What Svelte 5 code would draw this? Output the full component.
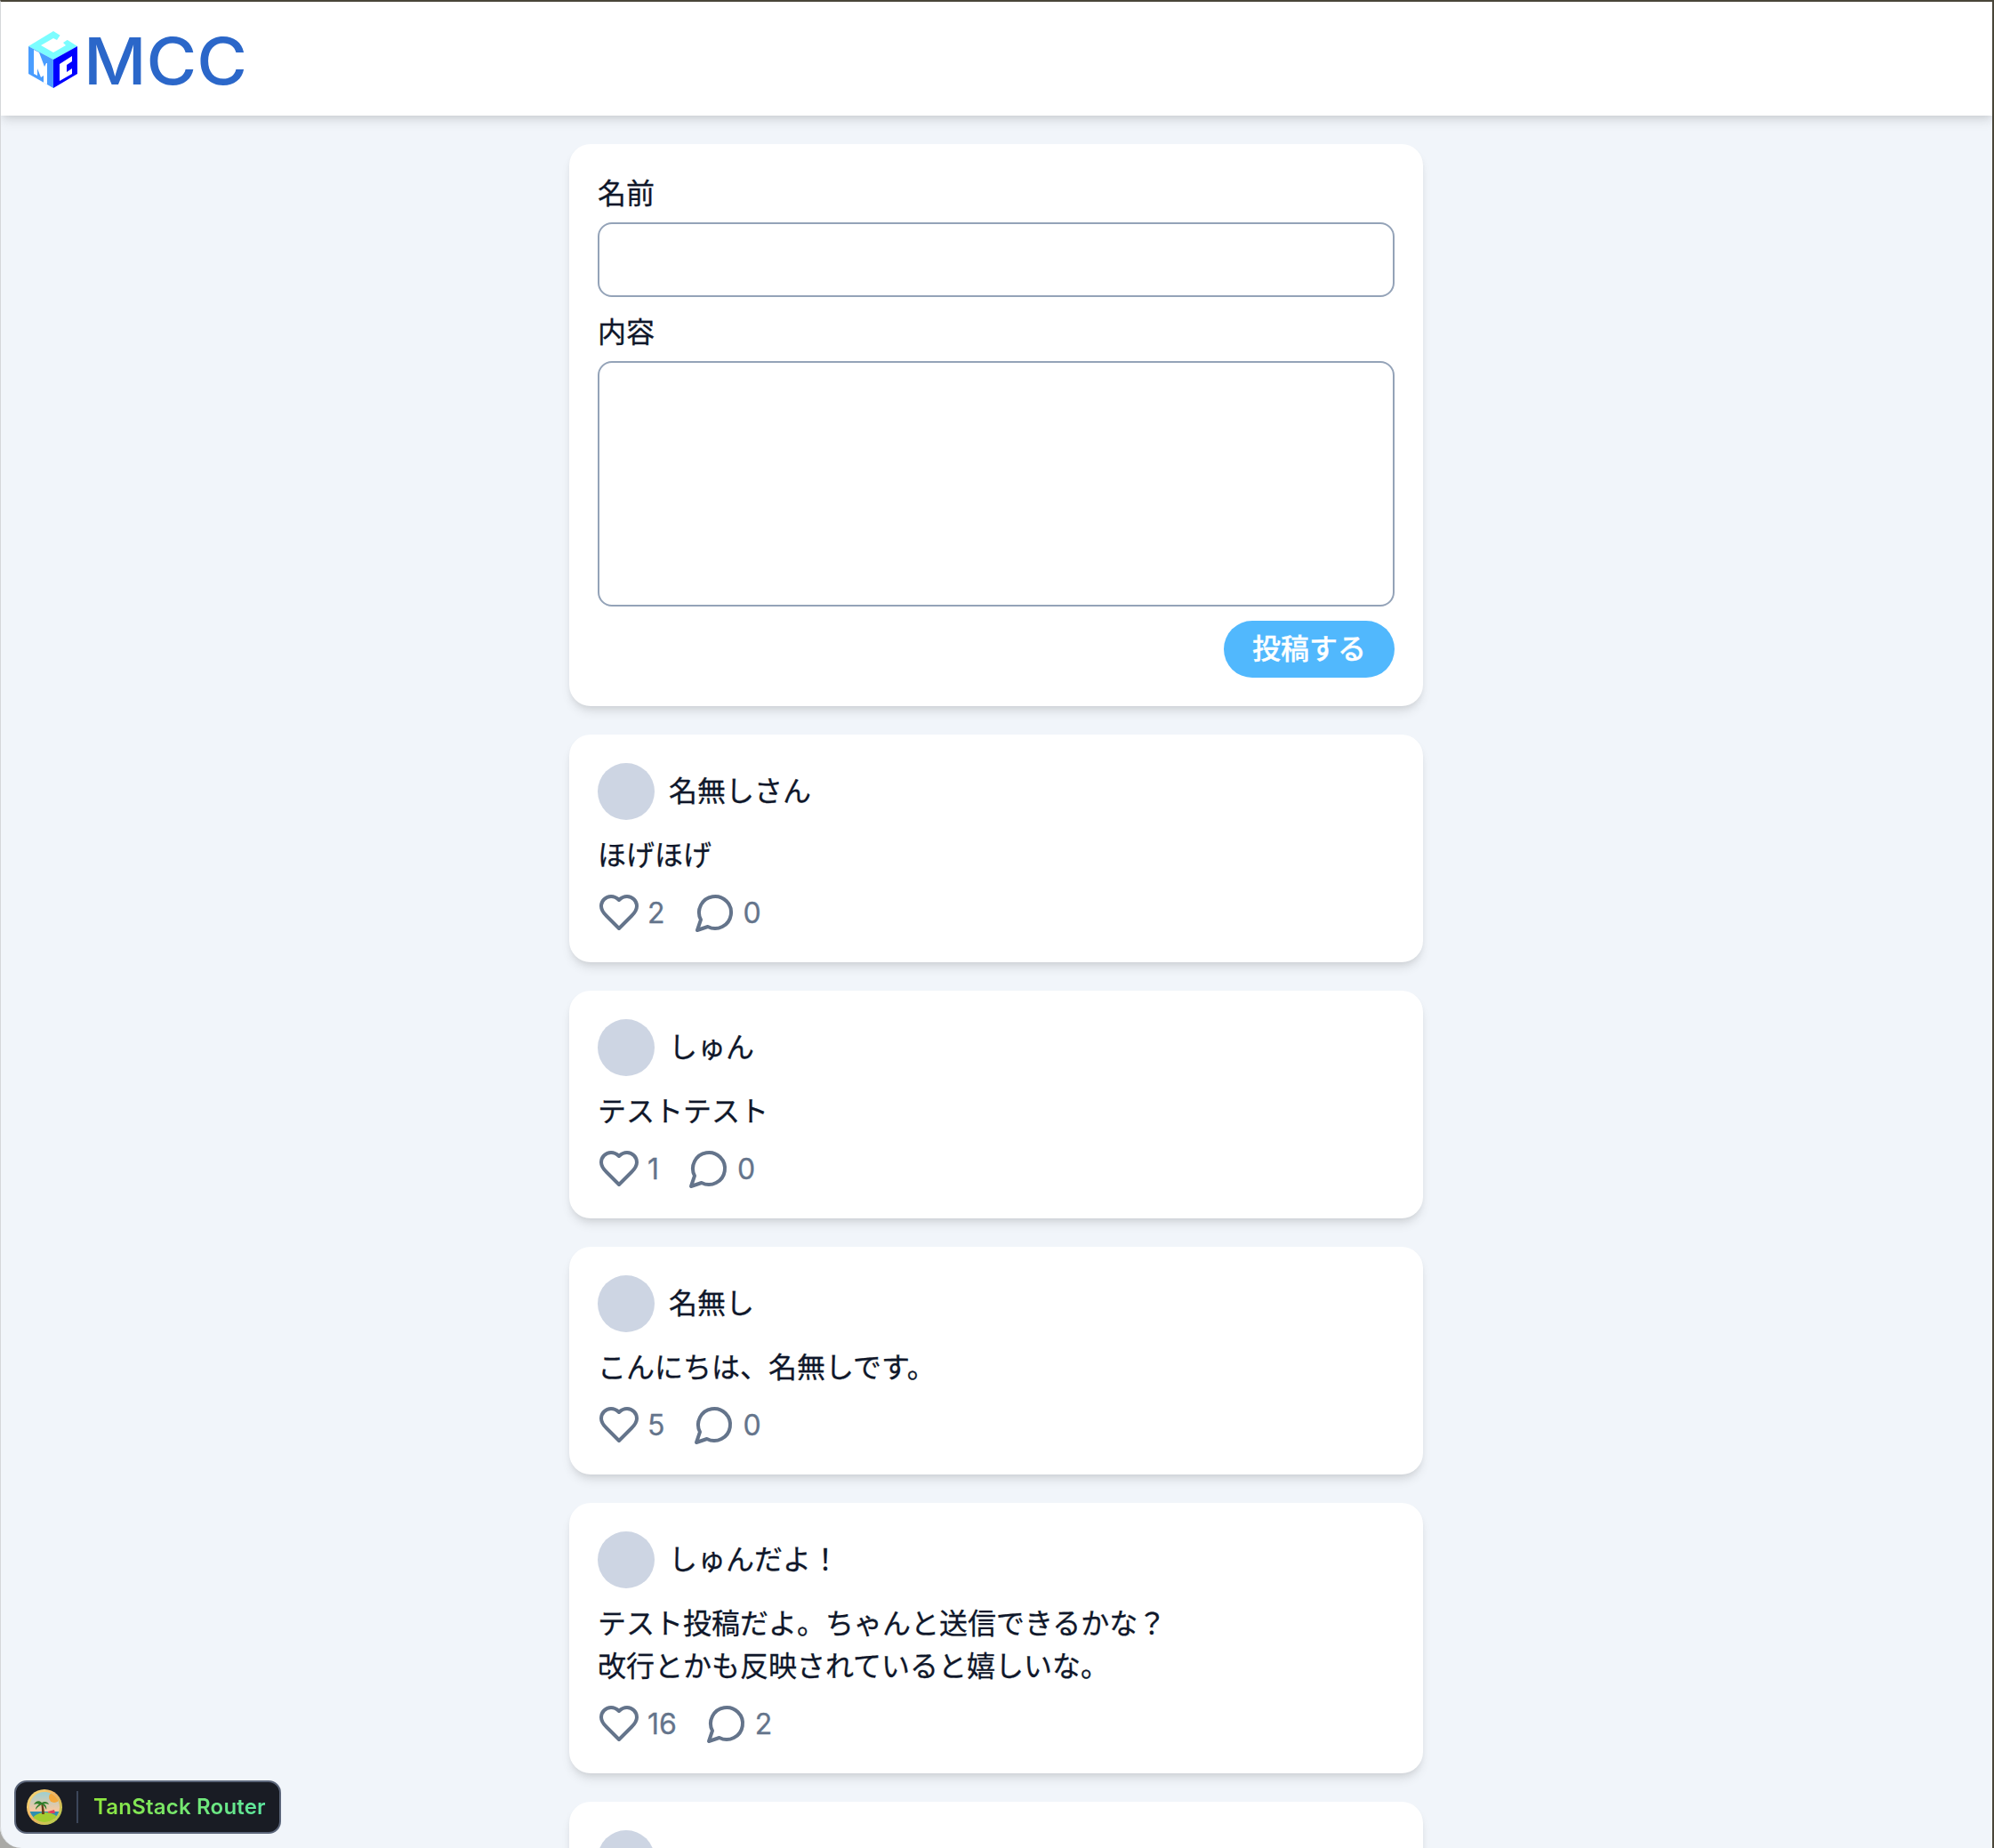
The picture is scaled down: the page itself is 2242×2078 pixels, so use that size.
<script lang="ts">
  const posts = [
    { id: 1, name: "名無しさん", body: "ほげほげ", likes: 2, replies: 0 },
    { id: 2, name: "しゅん", body: "テストテスト", likes: 1, replies: 0 },
    { id: 3, name: "名無し", body: "こんにちは、名無しです。", likes: 5, replies: 0 },
    { id: 4, name: "しゅんだよ！", body: "テスト投稿だよ。ちゃんと送信できるかな？\n改行とかも反映されていると嬉しいな。", likes: 16, replies: 2 },
  ];
</script>

<div class="page">
  <header class="header">
    <svg class="logo" width="290" height="128" viewBox="0 -24 290 128" role="img" aria-label="MCC">
      <!-- cube -->
      <polygon points="60,8 32,25 60,40 87,25" fill="#7bfdff" />
      <polygon points="46,24 60,16 64,18 68,12 77,17 71,21 74,24 60,32" fill="#fff" />
      <polygon points="32,25 60,40 60,72 32,56" fill="#4a9dff" />
      <polygon points="38,29 44,32 50,48 52,44 53,44 53,68 49,66 49,58 46,60 42,50 42,58 38,56" fill="#fff" />
      <polygon points="60,40 87,25 87,56 60,72" fill="#0000ff" />
      <polygon points="67,45 81,36 81,42 75,46 75,54 81,50 81,56 67,64" fill="#fff" />
      <text x="94" y="68" class="logo-text" textLength="184" lengthAdjust="spacingAndGlyphs">MCC</text>
    </svg>
  </header>

  <main class="main">
    <form class="card form" on:submit|preventDefault>
      <label for="name">名前</label>
      <input id="name" type="text" />
      <label for="content" class="second">内容</label>
      <textarea id="content"></textarea>
      <div class="submit-row">
        <button class="submit" type="submit">投稿する</button>
      </div>
    </form>

    {#each posts as post (post.id)}
      <article class="card post">
        <div class="meta">
          <span class="avatar"></span>
          <span class="name">{post.name}</span>
        </div>
        <p class="body">{post.body}</p>
        <div class="actions">
          <span class="action">
            <svg width="48" height="48" viewBox="0 0 24 24" fill="none" stroke="currentColor" stroke-width="2" stroke-linecap="round" stroke-linejoin="round">
              <path d="M19 14c1.49-1.46 3-3.21 3-5.5A5.5 5.5 0 0 0 16.5 3c-1.76 0-3 .5-4.5 2-1.5-1.5-2.74-2-4.5-2A5.5 5.5 0 0 0 2 8.5c0 2.3 1.5 4.05 3 5.5l7 7Z" />
            </svg>
            <span class="count">{post.likes}</span>
          </span>
          <span class="action">
            <svg width="48" height="48" viewBox="0 0 24 24" fill="none" stroke="currentColor" stroke-width="2" stroke-linecap="round" stroke-linejoin="round">
              <path d="M7.9 20A9 9 0 1 0 4 16.1L2 22Z" />
            </svg>
            <span class="count">{post.replies}</span>
          </span>
        </div>
      </article>
    {/each}

    <!-- next post, only its avatar is on screen -->
    <article class="card post">
      <div class="meta">
        <span class="avatar"></span>
      </div>
    </article>
  </main>

  <!-- devtools toggle -->
  <button class="devtools" type="button">
    <svg class="tsr-logo" width="40" height="40" viewBox="0 0 40 40">
      <defs>
        <linearGradient id="ring" x1="0" y1="0" x2="1" y2="1">
          <stop offset="0" stop-color="#f5e27a" />
          <stop offset="0.5" stop-color="#f0b060" />
          <stop offset="1" stop-color="#a8d848" />
        </linearGradient>
        <linearGradient id="sky" x1="0" y1="0" x2="0" y2="1">
          <stop offset="0" stop-color="#8fd0d8" />
          <stop offset="0.6" stop-color="#f8c8a0" />
        </linearGradient>
        <clipPath id="inner"><circle cx="20" cy="20" r="17" /></clipPath>
      </defs>
      <circle cx="20" cy="20" r="20" fill="url(#ring)" />
      <g clip-path="url(#inner)">
        <rect width="40" height="40" fill="url(#sky)" />
        <circle cx="31" cy="9" r="6" fill="#f4a83c" />
        <rect y="25" width="40" height="8" fill="#2f8fb0" />
        <path d="M24 25l7-2 1 4-8 0Z" fill="#e0405a" />
        <ellipse cx="21" cy="35" rx="15" ry="9" fill="#a4cc30" />
        <path d="M17 28c0-5 0-8-1-13l2 0c1 5 2 8 2 13Z" fill="#6b3f1c" />
        <path d="M17 15c-3-3-7-2-9 2 3-1 5-1 6 0-2 1-4 3-4 6 2-3 5-5 7-6 2 1 4 3 5 6 1-3-1-6-3-7 2 0 4 0 6 1-1-3-5-4-8-2Z" fill="#2f7d2a" />
      </g>
    </svg>
    <span class="divider"></span>
    <span class="tsr-text">TanStack Router</span>
  </button>

  <!-- window edge captured in the screenshot -->
  <div class="frame"></div>
</div>

<style>
  :global(html), :global(body) {
    overflow: hidden;
    background: #a9a9a6;
  }

  .page {
    position: relative;
    height: 2078px;
    overflow: hidden;
    background: #f1f5fa;
    color: #0f172a;
    font-family: Inter, "Noto Sans CJK JP", sans-serif;
    font-size: 32px;
    line-height: 48px;
    -webkit-text-stroke: .3px;
    border-bottom-left-radius: 24px;
  }

  .frame {
    position: absolute;
    inset: 0;
    pointer-events: none;
    border-top: 2px solid #4a4639;
    border-right: 2px solid #4a4639;
    border-left: 1px solid #d5d7da;
    border-bottom-left-radius: 24px;
  }

  .header {
    display: flex;
    align-items: center;
    height: 130px;
    padding-top: 2px;
    box-sizing: border-box;
    background: #fff;
    box-shadow: 0 8px 12px -2px rgb(0 0 0 / .1), 0 4px 8px -4px rgb(0 0 0 / .1);
    position: relative;
  }

  .logo {
    margin-top: 2px;
  }

  .logo-text {
    font-family: Inter, sans-serif;
    font-size: 73px;
    font-weight: 500;
    fill: #2b67c9;
    stroke: none;
  }

  .main {
    width: 960px;
    margin: 32px auto 0;
    padding-right: 2px;
    display: flex;
    flex-direction: column;
    gap: 32px;
  }

  .card {
    background: #fff;
    border-radius: 24px;
    padding: 32px;
    box-shadow: 0 8px 12px -2px rgb(0 0 0 / .1), 0 4px 8px -4px rgb(0 0 0 / .1);
    box-sizing: border-box;
    width: 960px;
    flex: none;
  }

  .form {
    display: flex;
    flex-direction: column;
  }

  label {
    display: block;
    margin-bottom: 8px;
  }

  label.second {
    margin-top: 16px;
  }

  input, textarea {
    display: block;
    width: 100%;
    box-sizing: border-box;
    border: 2px solid #94a3b8;
    border-radius: 16px;
    background: #fff;
    outline: none;
    font: inherit;
    padding: 16px;
  }

  input {
    height: 84px;
  }

  textarea {
    height: 276px;
    resize: none;
  }

  .submit-row {
    display: flex;
    justify-content: flex-end;
    margin-top: 16px;
  }

  .submit {
    height: 64px;
    padding: 8px 32px;
    border: none;
    border-radius: 32px;
    background: #51b8fd;
    color: #fff;
    font: inherit;
    font-weight: 500;
  }

  .meta {
    display: flex;
    align-items: center;
    gap: 16px;
    height: 64px;
  }

  .avatar {
    width: 64px;
    height: 64px;
    border-radius: 50%;
    background: #cdd5e3;
  }

  .body {
    margin: 16px 0;
    min-height: 48px;
    white-space: pre-line;
  }

  .actions {
    display: flex;
    gap: 32px;
    height: 48px;
    color: #64748b;
  }

  .action {
    display: flex;
    align-items: center;
    gap: 8px;
  }

  .count {
    line-height: 46px;
    margin-top: 2px;
  }

  .devtools {
    position: absolute;
    left: 16px;
    top: 2002px;
    width: 300px;
    height: 60px;
    box-sizing: border-box;
    display: flex;
    align-items: center;
    padding: 0 0 0 12px;
    border: 2px solid #5b6579;
    border-radius: 14px;
    background: #191c24;
    font-family: Inter, sans-serif;
  }

  .divider {
    width: 2px;
    height: 36px;
    margin: 0 17px 0 16px;
    background: #3c465a;
  }

  .tsr-text {
    font-size: 24px;
    font-weight: 600;
    line-height: 32px;
    letter-spacing: .2px;
    background: linear-gradient(to right, #8fe63c, #5de8a0);
    background-clip: text;
    -webkit-background-clip: text;
    color: transparent;
    -webkit-text-stroke: 0;
  }
</style>
